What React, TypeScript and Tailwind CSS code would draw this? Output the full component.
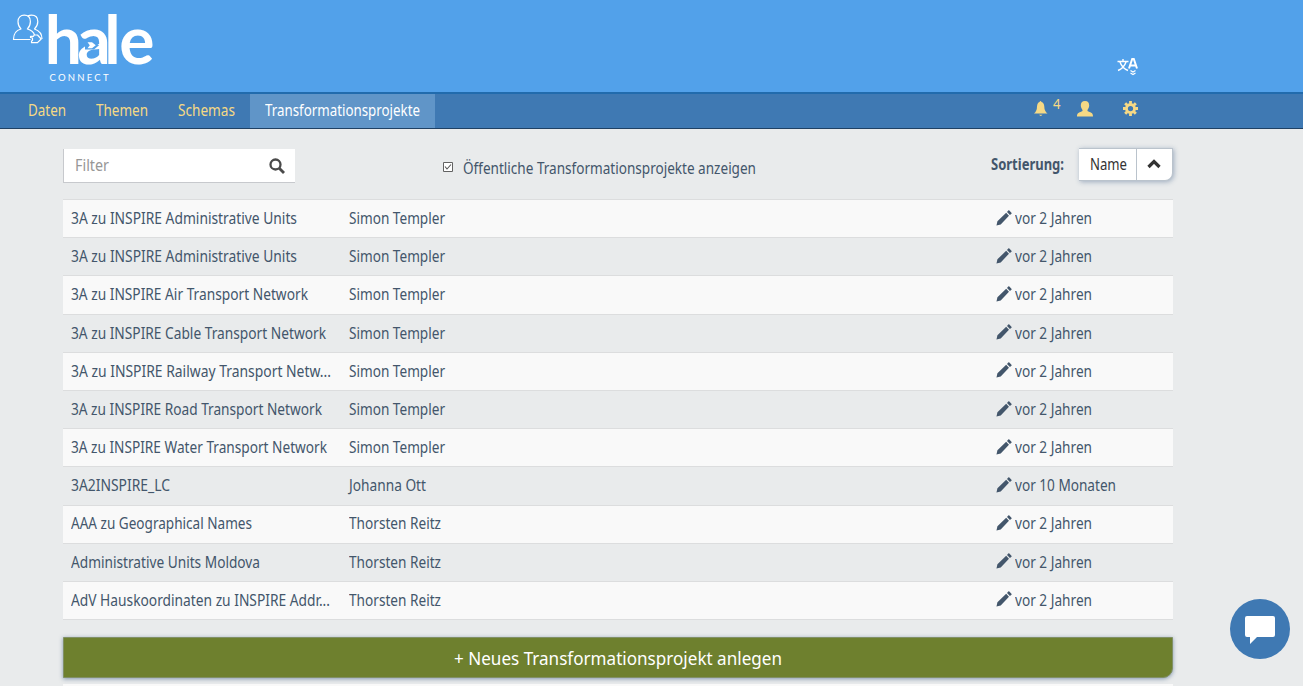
import { useLayoutEffect, useRef } from 'react';

const rows: [string, number, string, number, string][] = [
  ['3A zu INSPIRE Administrative Units', 226, 'Simon Templer', 96, 'vor 2 Jahren'],
  ['3A zu INSPIRE Administrative Units', 226, 'Simon Templer', 96, 'vor 2 Jahren'],
  ['3A zu INSPIRE Air Transport Network', 237, 'Simon Templer', 96, 'vor 2 Jahren'],
  ['3A zu INSPIRE Cable Transport Network', 255, 'Simon Templer', 96, 'vor 2 Jahren'],
  ['3A zu INSPIRE Railway Transport Netw...', 260, 'Simon Templer', 96, 'vor 2 Jahren'],
  ['3A zu INSPIRE Road Transport Network', 251, 'Simon Templer', 96, 'vor 2 Jahren'],
  ['3A zu INSPIRE Water Transport Network', 256, 'Simon Templer', 96, 'vor 2 Jahren'],
  ['3A2INSPIRE_LC', 99, 'Johanna Ott', 77, 'vor 10 Monaten'],
  ['AAA zu Geographical Names', 181, 'Thorsten Reitz', 92, 'vor 2 Jahren'],
  ['Administrative Units Moldova', 189, 'Thorsten Reitz', 92, 'vor 2 Jahren'],
  ['AdV Hauskoordinaten zu INSPIRE Addr...', 259, 'Thorsten Reitz', 92, 'vor 2 Jahren'],
];

/** Text condensed to a given advance width. */
function Fit({ text, w, className = '' }: { text: string; w: number; className?: string }) {
  const ref = useRef<HTMLSpanElement>(null);
  useLayoutEffect(() => {
    const el = ref.current;
    if (!el) return;
    el.style.transform = 'none';
    el.style.transform = `scaleX(${w / el.getBoundingClientRect().width})`;
  }, [text, w]);
  return (
    <span className={`block shrink-0 whitespace-nowrap ${className}`} style={{ width: w }}>
      <span ref={ref} className="inline-block origin-left">{text}</span>
    </span>
  );
}

function Logo() {
  return (
    <svg className="overflow-visible" width="180" height="92" viewBox="0 0 180 92" fill="none">
      <g stroke="#fff" strokeWidth="1.2" strokeLinejoin="round">
        <path d="M30.500 39.500H13.500c0-5.500 1.500-9 7.500-10.500-2-2-3-4.500-3-7.500 0-4 2.600-6.300 6.200-6.300s6.200 2.300 6.200 6.300c0 3-1 5.500-3 7.500 4.300 1.200 6.300 3 7.100 6" />
        <path d="M28 15.800c1-.4 2-.6 3.500-.6 3.700 0 6.300 2.300 6.300 6.300 0 3-1.300 5.500-3.300 7.500 5.500 1.900 7.500 5 7.500 10" />
        <path d="M30.500 36.300h3l.7-1.300h3.300l3.700 4-3.700 3.700h-6v-1.700l1-.5v-2.500l-2-.5z" />
      </g>
      <text x="44.800 77.200 104.300 119.300" y="63.700" fill="#fff" fontFamily="Lato" fontWeight="700" fontSize="66">hale</text>
      {/* Double arrow set into the wordmark */}
      <path d="M85 41h9l5 4.300-5 4.300h-9z" fill="#52a1ea" />
      <path d="M87.500 42.300h4.500l3.800 3-3.800 3h-4.500l2.300-3z" fill="#fff" />
      <text x="49.500" y="80.500" fill="#fff" fontFamily="Lato" fontSize="9.500" textLength="59" lengthAdjust="spacing">CONNECT</text>
    </svg>
  );
}

function Pencil() {
  return (
    <svg className="mr-[3px] shrink-0 -translate-y-px" width="16" height="16" viewBox="0 0 17 17" fill="#43566b">
      <path d="M.5 16.500l1-4.500L10.800 3l3 3L5 15.500zM11.700 2L13 .6q.6-.5 1.200 0L16.400 2.800q.6.600 0 1.200L14.800 5.200z" />
    </svg>
  );
}

export default function App() {
  return (
    <div className="relative h-[686px] w-[1303px] overflow-hidden bg-[#e9ebec] text-base text-[#43566b] [font-family:'Noto_Sans',sans-serif]">
      <header className="flex h-[92px] justify-between bg-[#52a1ea]">
        <Logo />
        <svg className="mt-[56px] mr-[164px]" width="22" height="22" viewBox="0 0 22 22" fill="none" stroke="#fff">
          <path d="M.5 5.500h11M6 3v2.500M3 6q2 6 8 8.500M9 6q-2 6-8 8.500" strokeWidth="1.400" />
          <path d="M12 12.500l3.200-9.500h1.600L20 12.500M13 9.500h6" strokeWidth="2" />
          <path d="M13.500 14.500l2.500 1.500 2.500-1.500M13.500 17l2.500 1.500 2.500-1.500" strokeWidth="1.200" />
        </svg>
      </header>
      <nav className="flex h-[37px] items-stretch border-t-2 border-b border-t-[#216bad] border-b-[#1f4164] bg-[#3f79b3] text-[15.500px] leading-[33px] text-[#f6d985]">
        <Fit text="Daten" w={38} className="ml-[28px]" />
        <Fit text="Themen" w={52} className="ml-[30px]" />
        <Fit text="Schemas" w={57} className="ml-[30px]" />
        <div className="ml-[15px] bg-[#6095c8] px-[15px] text-white">
          <Fit text="Transformationsprojekte" w={155} />
        </div>
        <svg className="ml-[598px] mt-[6px]" width="16" height="17" viewBox="0 0 16 17" fill="#f6d985">
          <path d="M1 13.500q3-2.500 3-7Q4.300 2.500 6.500 2 7.500 0 8.500 2 11 2.500 11.300 6.500q0 4.500 3.200 7zM6 14.800h3.500q-1.700 2.200-3.500 0" />
        </svg>
        <Fit text="4" w={7.5} className="ml-[4px] -mt-[7px] text-[14px]" />
        <svg className="ml-[16.500px] mt-[7px]" width="16" height="16" viewBox="0 0 16 16" fill="#f6d985">
          <path d="M8 0c3 0 4.300 2 4.200 4.500 0 2-1 3-1.700 4.500-.3 1 .5 1.500 2 2 2.500 1 3.500 1.500 3.500 4.500H0c0-3 1-3.500 3.500-4.500 1.500-.5 2.300-1 2-2C4.800 7.500 3.800 6.500 3.800 4.500 3.700 2 5 0 8 0z" />
        </svg>
        <svg className="ml-[29.500px] mt-[7px]" width="15" height="15" viewBox="0 0 16 16">
          <circle cx="8" cy="8" r="4.300" fill="none" stroke="#f6d985" strokeWidth="3" />
          <path d="M8 0v3M8 13v3M0 8h3M13 8h3M2.300 2.300l2.200 2.200M11.500 11.500l2.200 2.200M2.300 13.700l2.200-2.200M11.500 4.500l2.200-2.200" stroke="#f6d985" strokeWidth="3" />
        </svg>
      </nav>
      <main className="ml-[63px] w-[1110px]">
        <div className="flex h-[70px] pt-[20px]">
          <div className="flex h-[34px] w-[232px] items-center justify-between border-b border-l border-[#c7c9cd] bg-white pr-[10px] pl-[11px] text-[15.500px] text-[#979797]">
            <Fit text="Filter" w={34} />
            <svg width="16" height="16" viewBox="0 0 16 16" fill="none" stroke="#4a4a4a">
              <circle cx="6.500" cy="6.500" r="5" strokeWidth="2.300" />
              <path d="M10 10l5 5" strokeWidth="2.800" />
            </svg>
          </div>
          <svg className="mt-[13px] ml-[148px]" width="10" height="10" viewBox="0 0 10 10">
            <path d="M.5.500h9v9h-9z" fill="#fff" stroke="#626262" />
            <path d="M2 4.500L4 7l4-4.500" fill="none" stroke="#555" strokeWidth="1.100" />
          </svg>
          <Fit text="Öffentliche Transformationsprojekte anzeigen" w={293} className="mt-[8px] ml-[10px] text-[15.500px]" />
          <Fit text="Sortierung:" w={73} className="mt-[4px] ml-[235px] text-[15.500px] font-bold" />
          <div className="-mt-px ml-[15px] flex h-[33px] w-[94px] rounded-br-[8px] border-t border-r border-b border-[#bac3cc] bg-white text-[#333] shadow-[1px_1px_5px_rgba(67,96,135,0.45)]">
            <Fit text="Name" w={37} className="ml-[11px] pt-[4px] text-[15.500px]" />
            <div className="ml-[9px] border-l border-[#bac3cc] pt-[10px] pl-[10px]">
              <svg width="14" height="10" viewBox="0 0 14 10" fill="none"><path d="M1.500 8L7 2.500 12.500 8" stroke="#333" strokeWidth="3.200" /></svg>
            </div>
          </div>
        </div>
        <div className="flex h-[421px] flex-col border-t border-[#dcddde]">
          {rows.map(([name, nw, owner, ow, when], i) => (
            <div key={i} className="flex min-h-0 flex-1 items-center border-b border-[#dcddde] pl-[8px] text-[15.500px] odd:bg-[#f9f9f9]">
              <div className="w-[277.500px]"><Fit text={name} w={nw} /></div>
              <div className="w-[647px]"><Fit text={owner} w={ow} /></div>
              <Pencil />
              <Fit text={when} w={when.includes('10') ? 101 : 77} className="ml-[0.500px]" />
            </div>
          ))}
        </div>
        <button className="mt-[17px] flex h-[41px] w-full items-center justify-center rounded-br-[10px] border border-[#819067] bg-[#6e802e] pt-px text-[18.500px] text-white shadow-[0_1px_4px_rgba(67,96,135,0.6)]">
          <Fit text="+ Neues Transformationsprojekt anlegen" w={328} />
        </button>
        <div className="mt-[6px] h-[2px] bg-[#f9f9f9]" />
      </main>
      <div className="absolute top-[599px] left-[1230px] flex h-[60px] w-[60px] items-center justify-center rounded-full bg-[#3f79b3]">
        <svg className="translate-y-px" width="32" height="28" viewBox="0 0 32 28" fill="#fff"><path d="M3 0h26q2 0 2 2v17q0 2-2 2H13l-7 7v-7H3q-2 0-2-2V2q0-2 2-2z" /></svg>
      </div>
    </div>
  );
}
